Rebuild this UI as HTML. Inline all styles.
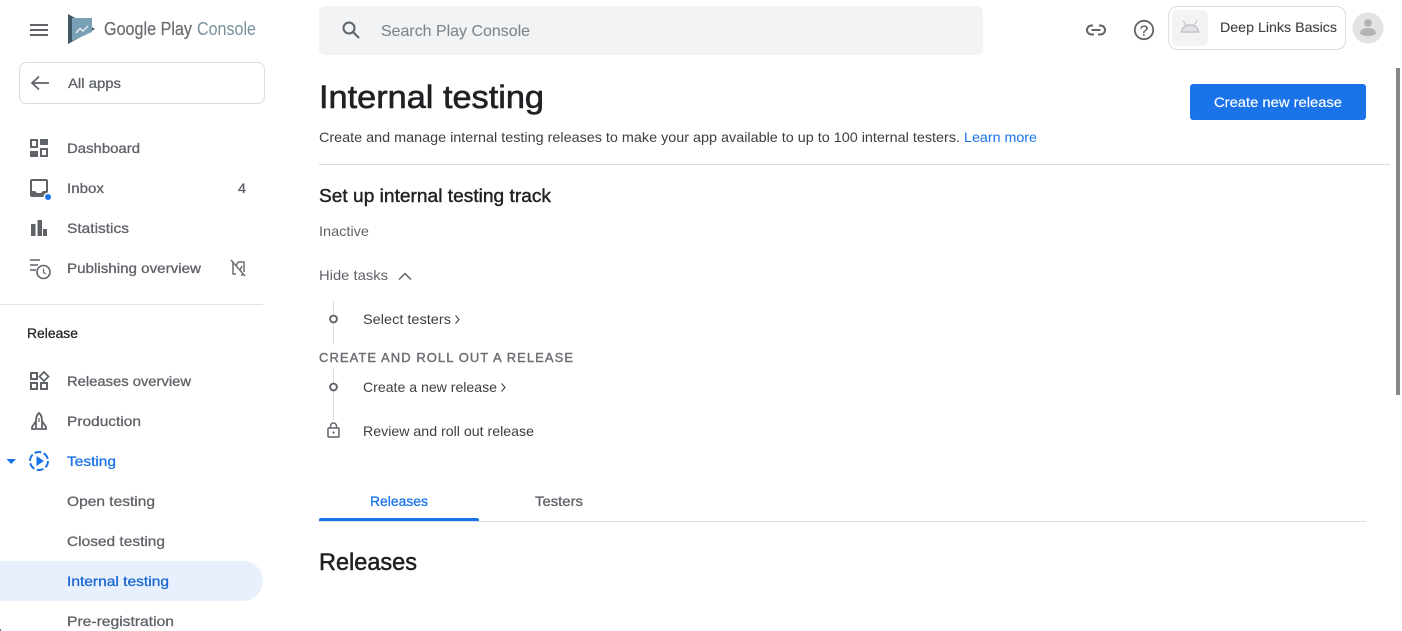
<!DOCTYPE html>
<html><head><meta charset="utf-8"><title>Internal testing</title>
<style>
html,body{margin:0;padding:0;background:#fff;width:1402px;height:631px;overflow:hidden}
svg{display:block;font-family:"Liberation Sans",Arial,sans-serif}
.n{font-size:14px;fill:#5f6368;stroke:#5f6368;stroke-width:.3}
.b{font-size:14px;fill:#1a73e8;stroke:#1a73e8;stroke-width:.3}
.t{font-size:14px;fill:#3c4043}
.g{font-size:14px;fill:#5f6368}
.h{fill:#202124;stroke:#202124}
.i{fill:none;stroke:#5f6368;stroke-width:2}
.f{fill:#5f6368}
</style></head><body>
<svg width="1402" height="631" viewBox="0 0 1402 631" xmlns="http://www.w3.org/2000/svg">
<rect width="1402" height="631" fill="#fff"/>
<rect x="0" y="629" width="1" height="2" fill="#777"/>
<!-- top -->
<path d="M30 25H48M30 30H48M30 35H48" stroke="#5f6368" stroke-width="2" fill="none"/>
<path d="M68 14L95 29L68 44Z" fill="#3f5663"/>
<path d="M72 18H92V32L72 41Z" fill="#7aa0b5"/>
<path d="M76 33L80 28.500L83 31L88 26" stroke="#e2ebef" stroke-width="1.500" fill="none"/>
<text x="104" y="35" font-size="18" fill="#6b6e72" stroke="#6b6e72" stroke-width=".25" textLength="88" lengthAdjust="spacingAndGlyphs">Google Play</text>
<text x="197" y="35" font-size="18" fill="#78909c" textLength="59" lengthAdjust="spacingAndGlyphs">Console</text>
<rect x="319" y="6" width="664" height="49" rx="6" fill="#f1f3f4"/>
<circle cx="349" cy="28" r="5.500" fill="none" stroke="#5f6368" stroke-width="2"/>
<path d="M353 32L359 38" stroke="#5f6368" stroke-width="2"/>
<text x="381" y="36" font-size="16" fill="#80868b" stroke="#80868b" stroke-width=".1" textLength="149" lengthAdjust="spacingAndGlyphs">Search Play Console</text>
<!-- link icon -->
<path d="M1093 25.500H1091.500a4.500 4.500 0 0 0 0 9H1094M1099 25.500H1100.500a4.500 4.500 0 0 1 0 9H1098M1091.500 30H1100.500" fill="none" stroke="#5f6368" stroke-width="2"/>
<!-- help -->
<circle cx="1144" cy="30" r="9.200" fill="none" stroke="#5f6368" stroke-width="1.800"/>
<text x="1144" y="35.500" font-size="15" fill="#5f6368" stroke="#5f6368" stroke-width=".3" text-anchor="middle">?</text>
<!-- app chip -->
<rect x="1168.500" y="6.500" width="177" height="43" rx="9" fill="#fff" stroke="#dadce0"/>
<rect x="1172" y="10" width="36" height="36" rx="6" fill="#f1f3f4"/>
<path d="M1181.500 32a8.500 7 0 0 1 17 0Z" fill="#e3e4e6" stroke="#c2c4c7" stroke-width="1.400"/>
<path d="M1183 20.500L1186 25.500M1197 20.500L1194 25.500" stroke="#c2c4c7" stroke-width="1.100"/>
<text x="1220" y="32" font-size="14" fill="#3c4043" stroke="#3c4043" stroke-width=".1" textLength="117" lengthAdjust="spacingAndGlyphs">Deep Links Basics</text>
<circle cx="1368" cy="28" r="15.500" fill="#e3e3e3"/>
<circle cx="1368" cy="23" r="3.800" fill="#b3b3b3"/>
<path d="M1360 33c0-3.500 4-5 8-5s8 1.500 8 5c0 1.500-4 3-8 3s-8-1.500-8-3Z" fill="#b3b3b3"/>
<!-- scrollbar -->
<rect x="1396" y="68" width="4" height="327" fill="#85878b"/>
<!-- sidebar -->
<rect x="19.500" y="62.500" width="245" height="41" rx="7" fill="#fff" stroke="#dadce0"/>
<path d="M49 83H32M39 76.500L32 83L39 89.500" fill="none" stroke="#5f6368" stroke-width="1.700"/>
<text x="68" y="88" class="n" textLength="53" lengthAdjust="spacingAndGlyphs">All apps</text>
<!-- dashboard -->
<rect x="31" y="140" width="6" height="7" class="i"/>
<rect x="40" y="139" width="8" height="6" class="f"/>
<rect x="30" y="151" width="8" height="6" class="f"/>
<rect x="41" y="149" width="6" height="7" class="i"/>
<text x="67" y="153" class="n" textLength="73" lengthAdjust="spacingAndGlyphs">Dashboard</text>
<!-- inbox -->
<rect x="30" y="179" width="18" height="18" rx="2" class="f"/>
<rect x="32" y="181" width="14" height="10" fill="#fff"/>
<path d="M35 191h8l-2 2h-4Z" fill="#fff"/>
<circle cx="48" cy="197" r="4.500" fill="#fff"/><circle cx="48" cy="197" r="3" fill="#1a73e8"/>
<text x="67" y="193" class="n" textLength="37" lengthAdjust="spacingAndGlyphs">Inbox</text>
<text x="238" y="193" class="n" textLength="8" lengthAdjust="spacingAndGlyphs">4</text>
<!-- stats -->
<rect x="31" y="224" width="4.500" height="12" class="f"/><rect x="37.500" y="220" width="4.500" height="16" class="f"/><rect x="43" y="229" width="4" height="7" class="f"/>
<text x="67" y="233" class="n" textLength="62" lengthAdjust="spacingAndGlyphs">Statistics</text>
<!-- publishing -->
<path d="M30 260H40M30 265H38M30 270H36" stroke="#5f6368" stroke-width="1.600" fill="none"/>
<circle cx="43.500" cy="272" r="6.500" fill="#fff" stroke="#5f6368" stroke-width="1.600"/>
<path d="M43.500 268.500V272.500L46 274" stroke="#5f6368" stroke-width="1.100" fill="none"/>
<text x="67" y="273" class="n" textLength="134" lengthAdjust="spacingAndGlyphs">Publishing overview</text>
<path d="M231 260L245 276M233 262V274H236M238 262H244V272M241 275H243M236 266L238 262M240 270L242 266" fill="none" stroke="#6b6f73" stroke-width="1.500"/>
<rect x="0" y="304" width="263" height="1" fill="#e3e4e6"/>
<text x="27" y="338" font-size="14" fill="#202124" stroke="#202124" stroke-width=".25" textLength="51" lengthAdjust="spacingAndGlyphs">Release</text>
<!-- releases overview -->
<rect x="31" y="373" width="6" height="6" fill="none" stroke="#5f6368" stroke-width="2"/>
<path d="M44 372L48.500 376.500L44 381L39.500 376.500Z" fill="none" stroke="#5f6368" stroke-width="1.800"/>
<rect x="31" y="383" width="6" height="6" fill="none" stroke="#5f6368" stroke-width="2"/>
<rect x="41" y="383" width="6" height="6" fill="none" stroke="#5f6368" stroke-width="2"/>
<text x="67" y="386" class="n" textLength="124" lengthAdjust="spacingAndGlyphs">Releases overview</text>
<!-- production -->
<path d="M39 413C36.500 415 36 418 36 421L32 427V429H46V427L42 421C42 418 41.500 415 39 413ZM36 421V428M42 421V428" fill="none" stroke="#5f6368" stroke-width="1.800"/>
<path d="M39 418V422" stroke="#5f6368" stroke-width="1.200"/>
<text x="67" y="426" class="n" textLength="74" lengthAdjust="spacingAndGlyphs">Production</text>
<!-- testing -->
<path d="M6.500 459H16L11.200 464Z" fill="#1a73e8"/>
<circle cx="39" cy="461" r="9" fill="none" stroke="#1a73e8" stroke-width="2" stroke-dasharray="7 2.400"/>
<path d="M36.500 456L44 461L36.500 466Z" fill="#1a73e8"/>
<text x="67" y="466" class="b" textLength="49" lengthAdjust="spacingAndGlyphs">Testing</text>
<text x="67" y="506" class="n" textLength="88" lengthAdjust="spacingAndGlyphs">Open testing</text>
<text x="67" y="546" class="n" textLength="98" lengthAdjust="spacingAndGlyphs">Closed testing</text>
<path d="M0 561H243a20 20 0 0 1 0 40H0Z" fill="#e8f0fe"/>
<text x="67" y="586" class="b" style="fill:#1967d2;stroke:#1967d2" textLength="102" lengthAdjust="spacingAndGlyphs">Internal testing</text>
<text x="67" y="626" class="n" textLength="107" lengthAdjust="spacingAndGlyphs">Pre-registration</text>
<!-- main -->
<text x="319" y="108" font-size="32" class="h" stroke-width=".6" textLength="225" lengthAdjust="spacingAndGlyphs">Internal testing</text>
<text x="319" y="142" class="t" textLength="641" lengthAdjust="spacingAndGlyphs">Create and manage internal testing releases to make your app available to up to 100 internal testers.</text>
<text x="964" y="142" font-size="14" fill="#1a73e8" textLength="73" lengthAdjust="spacingAndGlyphs">Learn more</text>
<rect x="1190" y="84" width="176" height="36" rx="3" fill="#1a73e8"/>
<text x="1214" y="107" font-size="14" fill="#fff" stroke="#fff" stroke-width=".15" textLength="128" lengthAdjust="spacingAndGlyphs">Create new release</text>
<rect x="319" y="164" width="1071" height="1" fill="#dadce0"/>
<text x="319" y="202" font-size="18" class="h" stroke-width=".4" textLength="232" lengthAdjust="spacingAndGlyphs">Set up internal testing track</text>
<text x="319" y="236" class="g" textLength="50" lengthAdjust="spacingAndGlyphs">Inactive</text>
<text x="319" y="280" class="g" textLength="69" lengthAdjust="spacingAndGlyphs">Hide tasks</text>
<path d="M399 279.500L405 273.500L411 279.500" fill="none" stroke="#5f6368" stroke-width="1.500"/>
<!-- stepper -->
<rect x="333" y="301" width="1" height="44" fill="#dadce0"/>
<rect x="333" y="369" width="1" height="52" fill="#dadce0"/>
<circle cx="333.500" cy="319" r="4.500" fill="#fff"/>
<circle cx="333.500" cy="319" r="3.400" fill="#fff" stroke="#5f6368" stroke-width="1.900"/>
<circle cx="333.500" cy="387" r="4.500" fill="#fff"/>
<circle cx="333.500" cy="387" r="3.400" fill="#fff" stroke="#5f6368" stroke-width="1.900"/>
<rect x="328" y="420" width="11" height="18" fill="#fff"/>
<rect x="328" y="428" width="11" height="9" rx="1" fill="none" stroke="#5f6368" stroke-width="1.500"/>
<path d="M330.500 428V426a3 3 0 0 1 6 0V428" fill="none" stroke="#5f6368" stroke-width="1.400"/>
<circle cx="333.500" cy="432.500" r="1.100" fill="#5f6368"/>
<text x="363" y="324" class="t" textLength="88" lengthAdjust="spacingAndGlyphs">Select testers</text>
<path d="M455.500 315.500L459 319.500L455.500 323.500" fill="none" stroke="#3c4043" stroke-width="1.100"/>
<text x="319" y="362" font-size="13" fill="#6b6f74" stroke="#6b6f74" stroke-width=".4" textLength="254" lengthAdjust="spacing">CREATE AND ROLL OUT A RELEASE</text>
<text x="363" y="392" class="t" textLength="134" lengthAdjust="spacingAndGlyphs">Create a new release</text>
<path d="M501.500 383.500L505 387.500L501.500 391.500" fill="none" stroke="#3c4043" stroke-width="1.100"/>
<text x="363" y="436" class="t" textLength="171" lengthAdjust="spacingAndGlyphs">Review and roll out release</text>
<!-- tabs -->
<text x="370" y="506" class="b" textLength="58" lengthAdjust="spacingAndGlyphs">Releases</text>
<text x="535" y="506" class="n" textLength="48" lengthAdjust="spacingAndGlyphs">Testers</text>
<rect x="319" y="521" width="1047" height="1" fill="#dadce0"/>
<path d="M319 521V520a2 2 0 0 1 2-2H477a2 2 0 0 1 2 2V521Z" fill="#1a73e8"/>
<text x="319" y="570" font-size="24" class="h" stroke-width=".5" textLength="98" lengthAdjust="spacingAndGlyphs">Releases</text>
</svg>
</body></html>
